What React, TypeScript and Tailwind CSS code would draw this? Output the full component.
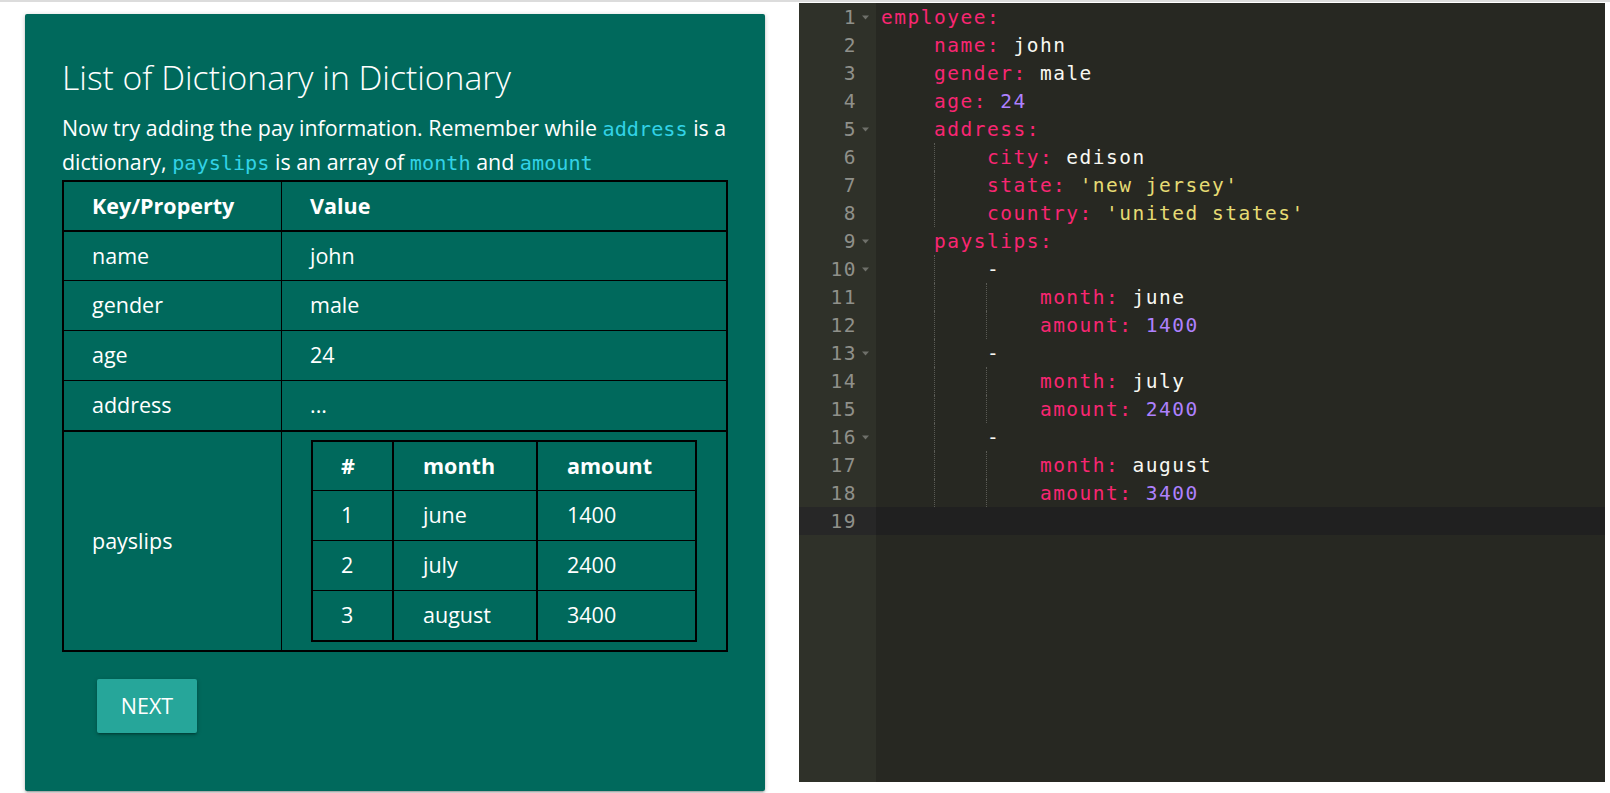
import React from "react";

type Tok = { t: string; c: "k" | "w" | "s" | "n" };
type Line = { indent: number; toks: Tok[]; fold?: boolean };

const k = (t: string): Tok => ({ t, c: "k" });
const w = (t: string): Tok => ({ t, c: "w" });
const s = (t: string): Tok => ({ t, c: "s" });
const n = (t: string): Tok => ({ t, c: "n" });

const lines: Line[] = [
  { indent: 0, toks: [k("employee:")], fold: true },
  { indent: 4, toks: [k("name:"), w(" john")] },
  { indent: 4, toks: [k("gender:"), w(" male")] },
  { indent: 4, toks: [k("age:"), w(" "), n("24")] },
  { indent: 4, toks: [k("address:")], fold: true },
  { indent: 8, toks: [k("city:"), w(" edison")] },
  { indent: 8, toks: [k("state:"), w(" "), s("'new jersey'")] },
  { indent: 8, toks: [k("country:"), w(" "), s("'united states'")] },
  { indent: 4, toks: [k("payslips:")], fold: true },
  { indent: 8, toks: [w("-")], fold: true },
  { indent: 12, toks: [k("month:"), w(" june")] },
  { indent: 12, toks: [k("amount:"), w(" "), n("1400")] },
  { indent: 8, toks: [w("-")], fold: true },
  { indent: 12, toks: [k("month:"), w(" july")] },
  { indent: 12, toks: [k("amount:"), w(" "), n("2400")] },
  { indent: 8, toks: [w("-")], fold: true },
  { indent: 12, toks: [k("month:"), w(" august")] },
  { indent: 12, toks: [k("amount:"), w(" "), n("3400")] },
  { indent: 0, toks: [] },
];

const tokClass: Record<Tok["c"], string> = {
  k: "text-[#f92672]",
  w: "text-[#f8f8f2]",
  s: "text-[#e6db74]",
  n: "text-[#ae81ff]",
};

function FoldArrow() {
  return (
    <svg width="7" height="5" viewBox="0 0 7 5" className="block">
      <polygon points="0,0.5 7,0.5 3.5,4.5" fill="#6f706a" />
    </svg>
  );
}

function Editor() {
  const active = lines.length - 1;
  return (
    <div className="w-[806px] h-[779px] mt-[1px] shrink-0 bg-[#272822] flex font-['DejaVu_Sans_Mono',monospace] text-[19.5px] tracking-[1.5px]">
      <div className="w-[77px] shrink-0 bg-[#2f3129] text-[#8f908a]">
        {lines.map((l, i) => (
          <div
            key={i}
            className={`flex h-[28px] leading-[28px] ${i === active ? "bg-[#272727]" : ""}`}
          >
            <div className="w-[58px] text-right relative top-[1px]">{i + 1}</div>
            <div className="w-[19px] pl-[5px] flex items-center">
              {l.fold ? <FoldArrow /> : null}
            </div>
          </div>
        ))}
      </div>
      <div className="flex-1">
        {lines.map((l, i) => (
          <div
            key={i}
            className={`relative h-[28px] leading-[28px] pl-[5px] whitespace-pre ${i === active ? "bg-[#202020]" : ""}`}
          >
            {l.indent >= 8 ? (
              <div className="absolute left-[58px] top-0 h-[28px] border-l border-dotted border-[#5a5b55]" />
            ) : null}
            {l.indent >= 12 ? (
              <div className="absolute left-[110px] top-0 h-[28px] border-l border-dotted border-[#5a5b55]" />
            ) : null}
            <span className="relative top-[1px]">
              {" ".repeat(l.indent)}
              {l.toks.map((t, j) => (
                <span key={j} className={tokClass[t.c]}>
                  {t.t}
                </span>
              ))}
            </span>
          </div>
        ))}
      </div>
    </div>
  );
}

function Code({ children }: { children: React.ReactNode }) {
  return (
    <span className="font-['DejaVu_Sans_Mono',monospace] text-[20.2px] leading-none text-[#32d2e6]">{children}</span>
  );
}

const outerRows: [string, string][] = [
  ["name", "john"],
  ["gender", "male"],
  ["age", "24"],
  ["address", "..."],
];

const pays: [string, string, string][] = [
  ["1", "june", "1400"],
  ["2", "july", "2400"],
  ["3", "august", "3400"],
];

function PayTable() {
  return (
    <div className="w-[386px] border-2 border-black">
      <div className="flex h-[48px] items-center font-bold">
        <div className="w-[81px] h-full border-r-2 border-black pl-[28px] flex items-center">#</div>
        <div className="w-[144px] h-full border-r-2 border-black pl-[29px] flex items-center">month</div>
        <div className="flex-1 h-full pl-[29px] flex items-center">amount</div>
      </div>
      {pays.map((r, i) => (
        <div key={i} className="flex h-[50px] border-t border-black">
          <div className="w-[81px] h-full border-r-2 border-black pl-[28px] flex items-center">{r[0]}</div>
          <div className="w-[144px] h-full border-r-2 border-black pl-[29px] flex items-center">{r[1]}</div>
          <div className="flex-1 h-full pl-[29px] flex items-center">{r[2]}</div>
        </div>
      ))}
    </div>
  );
}

function DictTable() {
  return (
    <div className="w-[666px] border-2 border-black text-[21.5px]">
      <div className="flex h-[48px] font-bold">
        <div className="w-[218px] border-r border-black pl-[28px] flex items-center">Key/Property</div>
        <div className="flex-1 pl-[28px] flex items-center">Value</div>
      </div>
      {outerRows.map((r, i) => (
        <div key={i} className={`flex h-[50px] border-t ${i === 0 ? "border-t-2" : ""} border-black`}>
          <div className="w-[218px] border-r border-black pl-[28px] flex items-center">{r[0]}</div>
          <div className="flex-1 pl-[28px] flex items-center">{r[1]}</div>
        </div>
      ))}
      <div className="flex border-t-2 border-black">
        <div className="w-[218px] border-r border-black pl-[28px] flex items-center">payslips</div>
        <div className="flex-1 pl-[29px] pt-[8px] pb-[8px]">
          <PayTable />
        </div>
      </div>
    </div>
  );
}

function Card() {
  return (
    <div className="w-[740px] h-[777px] bg-[#00695c] rounded-[2px] text-white pl-[37px] pt-[41px] shadow-[0_2px_2px_0_rgba(0,0,0,0.14),0_3px_1px_-2px_rgba(0,0,0,0.12),0_1px_5px_0_rgba(0,0,0,0.2)]">
      <h4 className="h-[44px] text-[33.7px] leading-[44px] font-light">List of Dictionary in Dictionary</h4>
      <p className="mt-[12px] text-[21.4px] leading-[34px]">
        Now try adding the pay information. Remember while <Code>address</Code> is a
        <br />
        dictionary, <Code>payslips</Code> is an array of <Code>month</Code> and <Code>amount</Code>
      </p>
      <div className="mt-[1px]">
        <DictTable />
      </div>
      <button className="mt-[27px] ml-[35px] w-[100px] h-[54px] rounded-[2px] bg-[#26a69a] text-white text-[21.5px] uppercase shadow-[0_2px_2px_0_rgba(0,0,0,0.14),0_3px_1px_-2px_rgba(0,0,0,0.12),0_1px_5px_0_rgba(0,0,0,0.2)]">
        Next
      </button>
    </div>
  );
}

export default function App() {
  return (
    <div className="w-[1610px] h-[793px] bg-white overflow-hidden font-['Open_Sans',sans-serif]">
      <div className="h-[2px] bg-[#dcdcdc]" />
      <div className="flex">
        <div className="w-[799px] shrink-0 pl-[25px] pt-[12px]">
          <Card />
        </div>
        <Editor />
      </div>
    </div>
  );
}
